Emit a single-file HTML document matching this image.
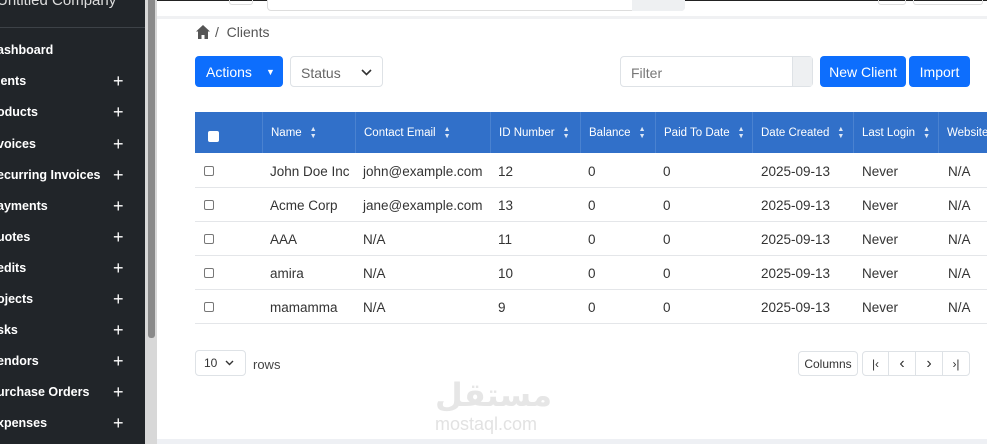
<!DOCTYPE html>
<html><head><meta charset="utf-8"><style>
*{margin:0;padding:0;box-sizing:border-box}
body{width:987px;height:444px;overflow:hidden;background:#fff;font-family:"Liberation Sans","Noto Sans CJK SC",sans-serif;position:relative;color:#212529}
.a{position:absolute}
.side{left:0;top:0;width:145px;height:444px;background:#212529;color:#fff;font-size:12.5px;font-weight:bold}
.side .it{position:absolute;left:-3px;width:145px}
.side .pl{position:absolute;left:116px;font-weight:normal;font-size:18px;top:-3px}
.hd{font-size:11.5px;color:#fff}
.th{position:absolute;top:112px;height:41px;border-left:1px solid #4a82d0;display:flex;align-items:center;padding-left:8px}
.sort{display:inline-block;margin-left:8px;font-size:7px;line-height:7px;color:#dbe6f5}
.row{position:absolute;left:195px;width:792px;height:34px;border-bottom:1px solid #e4e6e9;font-size:13.5px;color:#333}
.row span{position:absolute;top:10px}
.cb{position:absolute;left:9px;top:12px;width:10px;height:10px;border:1px solid #777;border-radius:2px}
.btn{position:absolute;background:#0d6efd;color:#fff;border-radius:4px;font-size:14px;display:flex;align-items:center;justify-content:center}
.pg{position:absolute;top:351px;height:25px;border:1px solid #dee2e6;font-size:12px;display:flex;align-items:center;justify-content:center;color:#333}
</style></head><body>
<div class="a side">
<div class="it" style="top:-8px;font-size:15px;font-weight:normal;color:#ddd">Untitled Company</div>
<div class="a" style="left:0;top:27px;width:145px;height:1px;background:#3d4247"></div>
<div class="it" style="top:43px">ashboard</div>
<div class="it" style="top:74px">ients<span class="pl">+</span></div>
<div class="it" style="top:105px">oducts<span class="pl">+</span></div>
<div class="it" style="top:137px">voices<span class="pl">+</span></div>
<div class="it" style="top:168px">ecurring Invoices<span class="pl">+</span></div>
<div class="it" style="top:199px">ayments<span class="pl">+</span></div>
<div class="it" style="top:230px">uotes<span class="pl">+</span></div>
<div class="it" style="top:261px">edits<span class="pl">+</span></div>
<div class="it" style="top:292px">ojects<span class="pl">+</span></div>
<div class="it" style="top:323px">sks<span class="pl">+</span></div>
<div class="it" style="top:354px">endors<span class="pl">+</span></div>
<div class="it" style="top:385px">urchase Orders<span class="pl">+</span></div>
<div class="it" style="top:416px">xpenses<span class="pl">+</span></div>
</div>
<div class="a" style="left:145px;top:0;width:12px;height:444px;background:#d8d8d8"></div>
<div class="a" style="left:148px;top:0;width:7px;height:338px;background:#8a8a8a;border-radius:0 0 3px 3px"></div>
<div class="a" style="left:157px;top:0;width:830px;height:1px;background:#222"></div>
<div class="a" style="left:157px;top:16px;width:830px;height:3px;background:#f0f1f3"></div>
<div class="a" style="left:229px;top:-5px;width:24px;height:10px;border:1px solid #ddd;border-radius:3px"></div>
<div class="a" style="left:267px;top:-5px;width:418px;height:16px;border:1px solid #ddd;border-radius:4px;background:#fff"></div>
<div class="a" style="left:632px;top:-5px;width:53px;height:16px;background:#eef0f2;border-radius:0 4px 4px 0"></div>
<div class="a" style="left:878px;top:-5px;width:28px;height:10px;border:1px solid #ddd;border-radius:3px"></div>
<div class="a" style="left:913px;top:-5px;width:70px;height:10px;border:1px solid #ddd;border-radius:3px"></div>
<div class="a" style="left:157px;top:439px;width:830px;height:5px;background:#eef0f4"></div>
<svg class="a" style="left:195px;top:24px" width="16" height="15" viewBox="0 0 16 15"><path d="M8 1L1 7.5h2V15h3.5v-4h3v4H13V7.5h2z" fill="#555"/></svg>
<div class="a" style="left:215px;top:24px;font-size:14px;color:#555">/ &nbsp;Clients</div>
<div class="btn" style="left:195px;top:56px;width:88px;height:31px;justify-content:flex-start;padding-left:11px">Actions<span style="position:absolute;left:71px;font-size:9px">▼</span></div>
<div class="a" style="left:290px;top:56px;width:93px;height:31px;border:1px solid #dee2e6;border-radius:4px;font-size:14px;color:#666;padding:8px 10px">Status<svg class="a" style="left:70px;top:12px" width="11" height="7"><path d="M1 1l4.5 4.5L10 1" stroke="#333" stroke-width="1.6" fill="none"/></svg></div>
<div class="a" style="left:620px;top:56px;width:193px;height:31px;border:1px solid #dee2e6;border-radius:4px;font-size:14px;color:#777;padding:8px 10px">Filter</div>
<div class="a" style="left:792px;top:57px;width:20px;height:29px;background:#eef0f2;border-left:1px solid #dee2e6"></div>
<div class="btn" style="left:820px;top:56px;width:86px;height:31px">New Client</div>
<div class="btn" style="left:909px;top:56px;width:61px;height:31px">Import</div>
<div class="a hd" style="left:195px;top:112px;width:792px;height:41px;background:#3170c9"></div>
<div class="a" style="left:208px;top:131px;width:11px;height:11px;background:#fff;border-radius:2px"></div>
<div class="th hd" style="left:262px">Name<span class="sort">▲<br>▼</span></div>
<div class="th hd" style="left:355px">Contact Email<span class="sort">▲<br>▼</span></div>
<div class="th hd" style="left:490px">ID Number<span class="sort">▲<br>▼</span></div>
<div class="th hd" style="left:580px">Balance<span class="sort">▲<br>▼</span></div>
<div class="th hd" style="left:655px">Paid To Date<span class="sort">▲<br>▼</span></div>
<div class="th hd" style="left:752px">Date Created<span class="sort">▲<br>▼</span></div>
<div class="th hd" style="left:853px">Last Login<span class="sort">▲<br>▼</span></div>
<div class="th hd" style="left:938px">Website</div>
<div class="row" style="top:154px"><i class="cb"></i><span style="left:75px">John Doe Inc</span><span style="left:168px">john@example.com</span><span style="left:303px">12</span><span style="left:393px">0</span><span style="left:468px">0</span><span style="left:566px">2025-09-13</span><span style="left:667px">Never</span><span style="left:753px">N/A</span></div>
<div class="row" style="top:188px"><i class="cb"></i><span style="left:75px">Acme Corp</span><span style="left:168px">jane@example.com</span><span style="left:303px">13</span><span style="left:393px">0</span><span style="left:468px">0</span><span style="left:566px">2025-09-13</span><span style="left:667px">Never</span><span style="left:753px">N/A</span></div>
<div class="row" style="top:222px"><i class="cb"></i><span style="left:75px">AAA</span><span style="left:168px">N/A</span><span style="left:303px">11</span><span style="left:393px">0</span><span style="left:468px">0</span><span style="left:566px">2025-09-13</span><span style="left:667px">Never</span><span style="left:753px">N/A</span></div>
<div class="row" style="top:256px"><i class="cb"></i><span style="left:75px">amira</span><span style="left:168px">N/A</span><span style="left:303px">10</span><span style="left:393px">0</span><span style="left:468px">0</span><span style="left:566px">2025-09-13</span><span style="left:667px">Never</span><span style="left:753px">N/A</span></div>
<div class="row" style="top:290px"><i class="cb"></i><span style="left:75px">mamamma</span><span style="left:168px">N/A</span><span style="left:303px">9</span><span style="left:393px">0</span><span style="left:468px">0</span><span style="left:566px">2025-09-13</span><span style="left:667px">Never</span><span style="left:753px">N/A</span></div>
<div class="pg" style="left:195px;width:51px;top:350px;height:26px;border-radius:4px;justify-content:flex-start;padding-left:8px">10 <svg style="margin-left:8px" width="9" height="6"><path d="M1 1l3.5 3.5L8 1" stroke="#333" stroke-width="1.4" fill="none"/></svg></div>
<div class="a" style="left:253px;top:357px;font-size:13px;color:#444">rows</div>
<div class="pg" style="left:798px;width:60px;border-radius:4px">Columns</div>
<div class="pg" style="left:862px;width:27px;border-radius:4px 0 0 4px">|&lsaquo;</div>
<div class="pg" style="left:888px;width:28px;font-size:16px">&lsaquo;</div>
<div class="pg" style="left:915px;width:28px;font-size:16px">&rsaquo;</div>
<div class="pg" style="left:942px;width:28px;border-radius:0 4px 4px 0">&rsaquo;|</div>
<div class="a" style="left:435px;top:376px;font-size:32px;font-weight:bold;color:#e6e6e6;font-family:'DejaVu Sans',sans-serif">مستقل</div>
<div class="a" style="left:435px;top:414px;font-size:18px;color:#e2e2e2">mostaql.com</div>
</body></html>
